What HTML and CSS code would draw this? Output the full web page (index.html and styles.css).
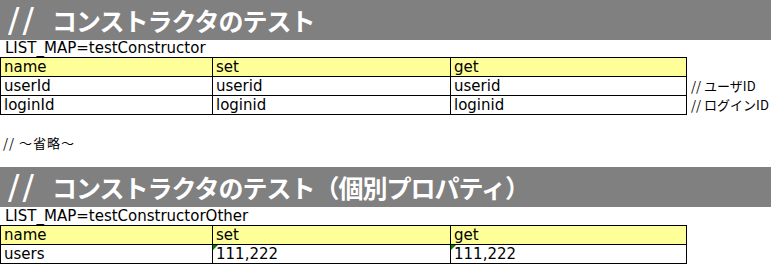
FILE: index.html
```html
<!DOCTYPE html>
<html lang="ja">
<head>
<meta charset="utf-8">
<title>コンストラクタのテスト</title>
<link rel="stylesheet" href="styles.css">
</head>
<body>
<section class="block">
  <h1 class="title"><span class="slashes">//</span>コンストラクタのテスト</h1>
  <div class="label">LIST_MAP=testConstructor</div>
  <table class="sheet">
    <colgroup><col class="c1"><col class="c2"><col class="c3"><col class="c4"></colgroup>
    <tr class="head"><td>name</td><td>set</td><td>get</td><td class="note"></td></tr>
    <tr><td>userId</td><td>userid</td><td>userid</td><td class="note">// ユーザID</td></tr>
    <tr><td>loginId</td><td>loginid</td><td>loginid</td><td class="note">// ログインID</td></tr>
  </table>
</section>
<div class="gap"><span class="remark">// ～省略～</span></div>
<section class="block">
  <h1 class="title"><span class="slashes">//</span>コンストラクタのテスト（個別プロパティ）</h1>
  <div class="label label-2">LIST_MAP=testConstructorOther</div>
  <table class="sheet">
    <colgroup><col class="c1"><col class="c2"><col class="c3"><col class="c4"></colgroup>
    <tr class="head"><td>name</td><td>set</td><td>get</td><td class="note"></td></tr>
    <tr><td>users</td><td class="flag">111,222</td><td class="flag">111,222</td><td class="note"></td></tr>
  </table>
</section>
</body>
</html>
```
FILE: styles.css
```css
html, body {
  margin: 0;
  padding: 0;
  background: #fff;
}

body {
  width: 771px;
  font-family: "DejaVu Sans", Verdana, sans-serif;
  font-size: 15px;
  color: #000;
}

.title {
  margin: 0;
  height: 40px;
  background: #808080;
  color: #fff;
  font-family: "Noto Sans CJK JP", sans-serif;
  font-weight: 700;
  font-size: 25px;
  letter-spacing: -1px;
  line-height: 40px;
  padding-left: 8px;
  white-space: nowrap;
  overflow: hidden;
}

.title .slashes {
  display: inline-block;
  width: 44px;
  font-family: "DejaVu Sans", sans-serif;
  font-weight: 400;
  font-size: 34px;
  letter-spacing: 3px;
  vertical-align: top;
}

.label {
  height: 17px;
  line-height: 17px;
  padding-left: 5px;
}

.label-2 {
  height: 18px;
  line-height: 18px;
}

.sheet {
  border-collapse: collapse;
  table-layout: fixed;
  width: 771px;
}

.sheet col.c1 { width: 212px; }
.sheet col.c2 { width: 238px; }
.sheet col.c3 { width: 236px; }
.sheet col.c4 { width: 85px; }

.sheet td {
  border: 1px solid #000;
  height: 18px;
  padding: 0 0 0 3px;
  line-height: 18px;
  white-space: nowrap;
  overflow: hidden;
  position: relative;
}

.sheet tr.head td {
  background: #ffff99;
}

.sheet tr.head td.note {
  background: #fff;
}

.sheet td.note {
  border: none;
  overflow: visible;
  padding-left: 4px;
  font-family: "Noto Sans CJK JP", sans-serif;
  font-size: 13px;
}

/* Excel-style error indicator in the cell corner */
.sheet td.flag::before {
  content: "";
  position: absolute;
  left: 0;
  top: 0;
  border-top: 5px solid #008000;
  border-right: 5px solid transparent;
}

.gap {
  height: 52px;
  box-sizing: border-box;
  padding: 19px 0 0 3px;
}

.remark {
  font-family: "Noto Sans CJK JP", sans-serif;
  font-size: 13px;
  line-height: 16px;
  letter-spacing: 1px;
}
```
